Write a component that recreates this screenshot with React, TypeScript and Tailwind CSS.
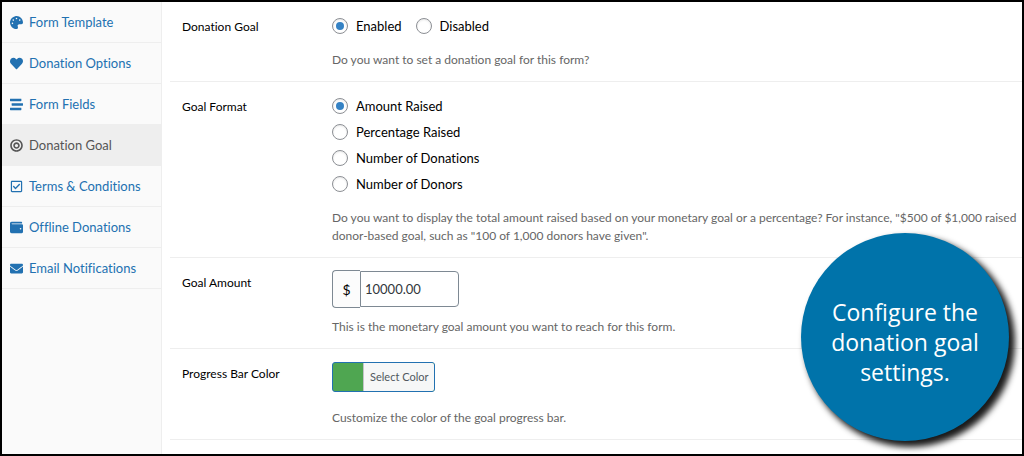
import { useState } from "react";
import type { ReactNode } from "react";
import type { IconType } from "react-icons";
import { FaBullseye, FaEnvelope, FaHeart, FaPalette, FaRegCheckSquare, FaStream, FaWallet } from "react-icons/fa";

type Tab = { label: string; icon: IconType };

const tabs: Tab[] = [
  { label: "Form Template", icon: FaPalette },
  { label: "Donation Options", icon: FaHeart },
  { label: "Form Fields", icon: FaStream },
  { label: "Donation Goal", icon: FaBullseye },
  { label: "Terms & Conditions", icon: FaRegCheckSquare },
  { label: "Offline Donations", icon: FaWallet },
  { label: "Email Notifications", icon: FaEnvelope },
];

const goalFormats = ["Amount Raised", "Percentage Raised", "Number of Donations", "Number of Donors"];

function Sidebar() {
  return (
    <nav className="w-40 shrink-0 border-r border-[#eee] bg-[#fafafa]">
      <ul>
        {tabs.map(({ label, icon: Icon }) => {
          const active = label === "Donation Goal";
          return (
            <li key={label} className={`border-b border-[#eee] ${active ? "bg-[#eee]" : ""}`}>
              <a
                href="#"
                className={`flex h-10 items-center gap-[6px] pl-2 text-[13px] whitespace-nowrap ${
                  active ? "text-[#555]" : "text-[#2271b1]"
                }`}
              >
                <Icon className="h-[13px] w-auto shrink-0" />
                <span className="pt-[2px]">{label}</span>
              </a>
            </li>
          );
        })}
      </ul>
    </nav>
  );
}

function FieldRow({ label, help, children }: { label: string; help: ReactNode; children: ReactNode }) {
  return (
    <div className="flex border-b border-[#eee] pt-[11px] pb-3 pl-3">
      <div className="w-[150px] shrink-0 pt-1 text-[12px] leading-5 text-black">{label}</div>
      <div className="min-w-0 flex-1">
        {children}
        <p className="text-[12px] leading-[18px] whitespace-nowrap text-[#666]">{help}</p>
      </div>
    </div>
  );
}

type RadioProps = { name: string; label: string; checked: boolean; onChange: () => void };

function Radio({ name, label, checked, onChange }: RadioProps) {
  return (
    <label className="flex h-[26px] items-center gap-2 text-[13px] text-black">
      <input
        type="radio"
        name={name}
        checked={checked}
        onChange={onChange}
        className="grid size-4 shrink-0 appearance-none place-content-center rounded-full border border-[#8c8f94] bg-white shadow-[inset_0_1px_2px_rgba(0,0,0,0.1)] before:size-2 before:rounded-full checked:before:bg-[#3582c4]"
      />
      <span className="pt-[2px]">{label}</span>
    </label>
  );
}

export default function App() {
  const [goal, setGoal] = useState("Enabled");
  const [format, setFormat] = useState("Amount Raised");
  const [amount, setAmount] = useState("10000.00");

  return (
    <div className="relative flex min-h-screen overflow-hidden border-2 border-black bg-white font-[Lato,sans-serif] [font-variant-ligatures:none]">
      <Sidebar />

      <main className="ml-2 min-w-0 flex-1 overflow-hidden">
        <FieldRow label="Donation Goal" help="Do you want to set a donation goal for this form?">
          <div className="flex gap-[14px] pb-3">
            {["Enabled", "Disabled"].map((value) => (
              <Radio key={value} name="goal" label={value} checked={goal === value} onChange={() => setGoal(value)} />
            ))}
          </div>
        </FieldRow>

        <FieldRow
          label="Goal Format"
          help={
            <>
              Do you want to display the total amount raised based on your monetary goal or a percentage? For instance,
              "$500 of $1,000 raised
              <br />
              donor-based goal, such as "100 of 1,000 donors have given".
            </>
          }
        >
          <div className="pb-3">
            {goalFormats.map((value) => (
              <Radio
                key={value}
                name="format"
                label={value}
                checked={format === value}
                onChange={() => setFormat(value)}
              />
            ))}
          </div>
        </FieldRow>

        <FieldRow
          label="Goal Amount"
          help="This is the monetary goal amount you want to reach for this form."
        >
          <div className="flex items-center pt-px pb-[10px]">
            <span className="flex h-[38px] w-7 items-center justify-center rounded-l border border-r-0 border-[#7e8993] bg-[#fcfcfc] text-[14px] text-black">
              $
            </span>
            <input
              type="text"
              aria-label="Goal Amount"
              value={amount}
              onChange={(e) => setAmount(e.target.value)}
              className="h-9 w-[99px] rounded-r border border-[#7e8993] bg-white px-1 text-[13px] text-[#32373c]"
            />
          </div>
        </FieldRow>

        <FieldRow label="Progress Bar Color" help="Customize the color of the goal progress bar.">
          <div className="pt-[2px] pb-[17px]">
            <button
              type="button"
              className="flex h-[30px] overflow-hidden rounded-[3px] border border-[#2271b1] bg-[#4fa651] pl-[30px] text-[11px]"
            >
              <span className="flex h-full items-center border-l border-[#c3c4c7] bg-[#f6f7f7] px-[6px] text-[#50575e]">
                Select Color
              </span>
            </button>
          </div>
        </FieldRow>
      </main>

      <aside className="absolute right-[13px] bottom-[13px] flex size-52 items-center justify-center rounded-full bg-[#0073aa] pt-[10px] text-center font-['Open_Sans',sans-serif] text-[23px] leading-[30px] text-white shadow-[5px_5px_6px_1px_rgba(0,0,0,0.9)]">
        <p className="w-40">Configure the donation goal settings.</p>
      </aside>
    </div>
  );
}
